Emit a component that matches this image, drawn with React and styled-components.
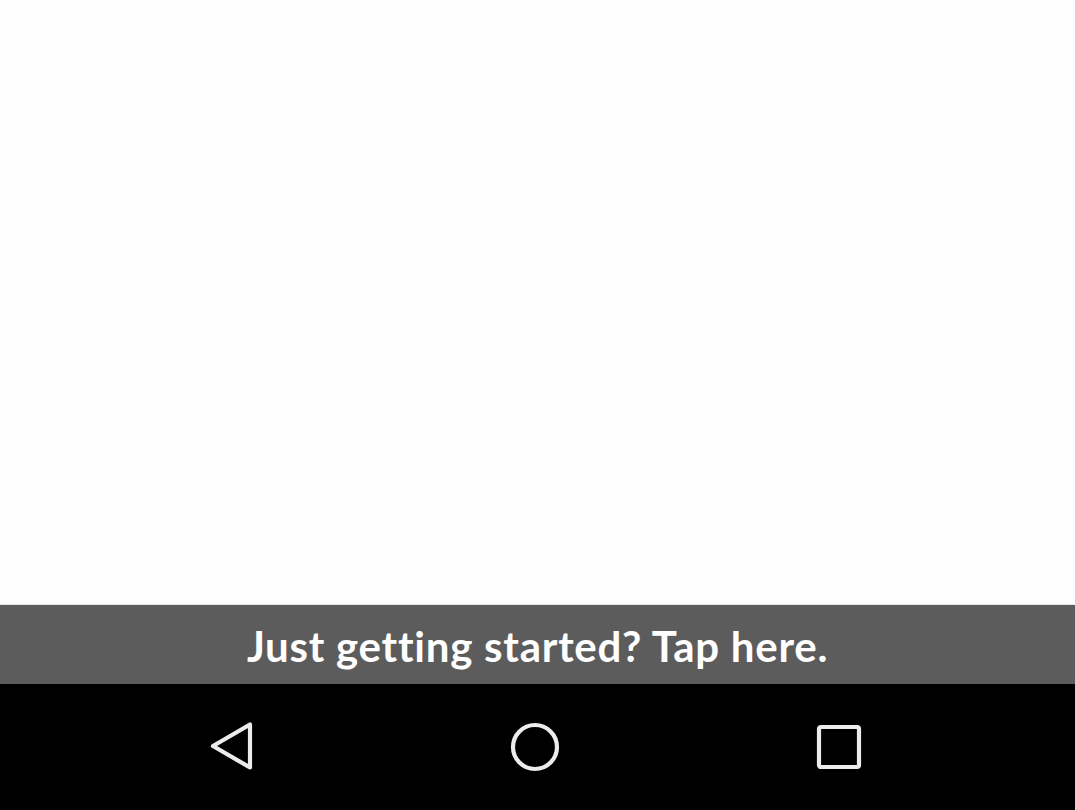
import React from "react";
import styled, { createGlobalStyle } from "styled-components";

const GlobalStyle = createGlobalStyle`
  html, body {
    margin: 0;
    padding: 0;
    height: 100%;
    background: #fff;
  }
  #root {
    height: 100%;
  }
`;

function App() {
  return (
    <Screen>
      <GlobalStyle />
      <Content />
      <Banner>Just getting started? Tap here.</Banner>
      <NavBar>
        <NavButton aria-label="Back">
          <svg width="48" height="52" viewBox="0 0 48 52">
            <path
              d="M6 25 L43 3.5 L43 46.5 Z"
              fill="none"
              stroke="#ececec"
              strokeWidth="4.2"
              strokeLinejoin="round"
            />
          </svg>
        </NavButton>
        <NavButton aria-label="Home">
          <svg width="52" height="52" viewBox="0 0 52 52">
            <circle cx="26" cy="26" r="22" fill="none" stroke="#ececec" strokeWidth="4.2" />
          </svg>
        </NavButton>
        <NavButton aria-label="Recents">
          <svg width="48" height="48" viewBox="0 0 48 48">
            <rect
              x="4"
              y="4"
              width="40"
              height="40"
              rx="2"
              fill="none"
              stroke="#ececec"
              strokeWidth="4.2"
            />
          </svg>
        </NavButton>
      </NavBar>
    </Screen>
  );
}

const Screen = styled.div`
  height: 100vh;
  display: flex;
  flex-direction: column;
  overflow: hidden;
`;

const Content = styled.div`
  flex: 1;
  background: #fefefe;
`;

const Banner = styled.div`
  height: 80px;
  flex-shrink: 0;
  background: #5c5c5c;
  border-top: 1px solid #e8e8e8;
  box-sizing: border-box;
  display: flex;
  align-items: center;
  justify-content: center;
  padding-top: 3px;
  color: #fff;
  font-family: Lato, "Open Sans", sans-serif;
  font-weight: 700;
  font-size: 42px;
  letter-spacing: 0.75px;
`;

const NavBar = styled.div`
  height: 126px;
  flex-shrink: 0;
  background: #000;
  display: flex;
  align-items: center;
  justify-content: center;
  gap: 204px;
  padding-right: 5px;
`;

const NavButton = styled.div`
  width: 100px;
  display: flex;
  align-items: center;
  justify-content: center;
`;

export default App;
